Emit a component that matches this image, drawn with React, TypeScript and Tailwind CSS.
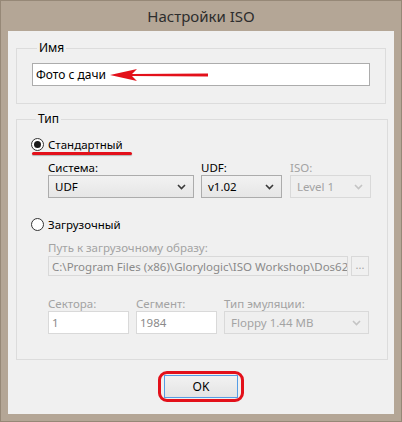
import React from 'react';

const font = { fontFamily: '"Noto Sans", "Open Sans", sans-serif' };

function Chevron({ disabled }: { disabled?: boolean }) {
  return (
    <svg width="9" height="6" viewBox="0 0 9 6" className="shrink-0">
      <path d="M1 1 L4.5 4.5 L8 1" fill="none" stroke={disabled ? '#c4c4c4' : '#3a3a3a'} strokeWidth="1.6" />
    </svg>
  );
}

function Select({ value, width, disabled }: { value: string; width: string; disabled?: boolean }) {
  return (
    <div
      className={
        'h-[23px] flex items-center justify-between pl-[6px] pr-[7px] border ' +
        width + ' ' +
        (disabled
          ? 'border-[#d9d9d9] bg-[#efefef] text-[#a3a3a3]'
          : 'border-[#acacac] bg-gradient-to-b from-[#f2f2f2] to-[#e6e6e6] text-black')
      }
    >
      <span>{value}</span>
      <Chevron disabled={disabled} />
    </div>
  );
}

function Radio({ checked, label }: { checked?: boolean; label: string }) {
  return (
    <div className="flex items-center h-[16px] gap-[4px]">
      <div className="w-[13px] h-[13px] rounded-full border border-[#333] bg-white flex items-center justify-center">
        {checked && <div className="w-[7px] h-[7px] rounded-full bg-[#1a1a1a]" />}
      </div>
      <span className="text-black">{label}</span>
    </div>
  );
}

export default function App() {
  return (
    <div
      className="w-[402px] h-[422px] bg-[#b4a696] border border-[#968877] flex flex-col text-[11.5px] leading-[15px]"
      style={font}
    >
      {/* Title bar */}
      <div className="h-[30px] flex items-center justify-center text-[15px] text-[#2d2d2d]">
        Настройки ISO
      </div>

      {/* Client area */}
      <div className="mx-[7px] h-[383px] bg-[#f0f0f0] pt-[9px]">
        {/* Имя */}
        <fieldset className="mx-[8px] border border-[#dcdcdc] px-[15px] pb-[17px]">
          <legend className="ml-[5px] px-[2px] h-[16px] leading-[16px] text-[12px] text-black">Имя</legend>
          <div className="relative mt-[7px] h-[23px] bg-white border border-[#acacac] flex items-center pl-[3px] text-[12px] text-black">
            Фото с дачи
            <svg className="absolute left-[77px] top-[4px]" width="100" height="14" viewBox="0 0 100 14">
              <path d="M0 7 L27 1 L22 6 L98 5.6 L98 8.4 L22 8 L27 13 Z" fill="#e3101a" />
            </svg>
          </div>
        </fieldset>

        {/* Тип */}
        <fieldset className="mx-[8px] mt-[7px] border border-[#dcdcdc] pl-[14px] pr-[16px] pb-[25px]">
          <legend className="ml-[5px] px-[2px] h-[16px] leading-[16px] text-[12px] text-black">Тип</legend>

          <div className="relative mt-[9px]">
            <Radio checked label="Стандартный" />
            <div className="absolute left-[1px] top-[16px] w-[100px] h-[3px] rounded-full bg-[#e3101a] shadow-[0_1px_1px_rgba(0,0,0,0.25)]" />
          </div>

          <div className="pl-[17px] mt-[8px] flex gap-[7px]">
            <div className="flex flex-col">
              <span className="h-[15px] text-black">Система:</span>
              <Select value="UDF" width="w-[146px]" />
            </div>
            <div className="flex flex-col">
              <span className="h-[15px] text-black">UDF:</span>
              <Select value="v1.02" width="w-[81px]" />
            </div>
            <div className="flex flex-col ml-[1px]">
              <span className="h-[15px] text-[#a3a3a3]">ISO:</span>
              <Select value="Level 1" width="w-[81px]" disabled />
            </div>
          </div>

          <div className="mt-[18px]">
            <Radio label="Загрузочный" />
          </div>

          <div className="pl-[17px]">
            <div className="mt-[8px] h-[16px] text-[#a3a3a3]">Путь к загрузочному образу:</div>
            <div className="flex gap-[3px]">
              <div className="w-[300px] h-[20px] border border-[#d9d9d9] bg-[#f0f0f0] text-[#8a8a8a] flex items-center pl-[3px] overflow-hidden whitespace-nowrap">
                C:\Program Files (x86)\Glorylogic\ISO Workshop\Dos62
              </div>
              <div className="w-[18px] h-[20px] border border-[#d9d9d9] bg-[#f0f0f0] text-[#a3a3a3] flex items-center justify-center text-[11px] pb-[3px]">
                ...
              </div>
            </div>

            <div className="mt-[20px] flex gap-[7px]">
              <div className="flex flex-col">
                <span className="h-[15px] text-[#a3a3a3]">Сектора:</span>
                <div className="w-[81px] h-[23px] bg-white border border-[#d9d9d9] text-[#8a8a8a] flex items-center pl-[3px]">1</div>
              </div>
              <div className="flex flex-col">
                <span className="h-[15px] text-[#a3a3a3]">Сегмент:</span>
                <div className="w-[81px] h-[23px] bg-white border border-[#d9d9d9] text-[#8a8a8a] flex items-center pl-[3px]">1984</div>
              </div>
              <div className="flex flex-col">
                <span className="h-[15px] text-[#a3a3a3]">Тип эмуляции:</span>
                <Select value="Floppy 1.44 MB" width="w-[145px]" disabled />
              </div>
            </div>
          </div>
        </fieldset>

        {/* OK */}
        <div className="mt-[11px] flex justify-center">
          <div className="border-[3px] border-[#e3101a] rounded-[9px] px-[3px] py-[1px]">
            <div className="w-[74px] h-[23px] border border-[#569de5] bg-gradient-to-b from-[#f2f2f2] to-[#e4e4e4] flex items-center justify-center text-[12px] text-black">
              OK
            </div>
          </div>
        </div>
      </div>
    </div>
  );
}
